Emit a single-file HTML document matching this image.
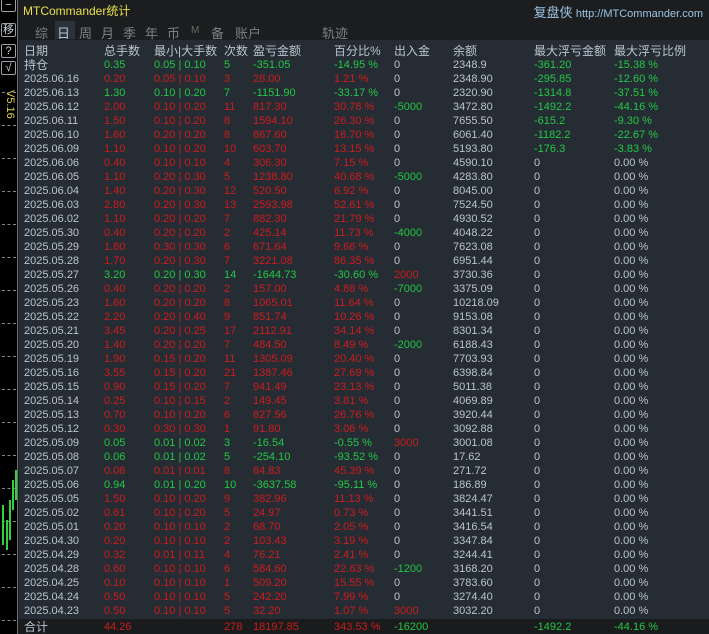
<!DOCTYPE html>
<html><head><meta charset="utf-8">
<style>
*{margin:0;padding:0;box-sizing:border-box}
body{width:709px;height:634px;background:#1c1d1f;font-family:"Liberation Sans","Noto Sans CJK SC",sans-serif;overflow:hidden;position:relative;color:#b8c4d0}
#strip{position:absolute;left:0;top:0;width:18px;height:634px;background:#000;border-right:1px solid #6a6e74}
.btn{position:absolute;left:1px;width:15px;height:14px;border:1px solid #9aa0a6;border-radius:2px;color:#d0d4d8;font-size:11px;line-height:12px;text-align:center}
.tick{position:absolute;left:2px;width:14px;border-top:1px dashed #888}
#title{position:absolute;left:19px;top:0;width:690px;height:40px;background:#1c1d1f}
#table{position:absolute;left:19px;top:40px;width:690px;height:594px;background:#262c34}
.row{position:absolute;left:0;height:14px;font-size:11px;line-height:14px;white-space:nowrap}
.row span{position:absolute;top:0}
.c0{left:5px}.c1{left:85px}.c2{left:135px}.c3{left:205px}.c4{left:234px}.c5{left:315px}.c6{left:375px}.c7{left:434px}.c8{left:515px}.c9{left:595px}
.r{color:#cc1c1c}.g{color:#22c744}
.h{font-size:12px;color:#b8c4d0}
</style></head><body>
<div id="strip">
<div class="btn" style="top:-2px">−</div>
<div class="btn" style="top:23px">移</div>
<div class="btn" style="top:44px">?</div>
<div class="btn" style="top:61px">√</div>
<div style="position:absolute;left:2px;top:90px;color:#e6d84a;font-size:11px;transform:rotate(90deg);transform-origin:left top;left:16px;white-space:nowrap">V5.16</div>
<div class="tick" style="top:92px"></div><div class="tick" style="top:125px"></div><div class="tick" style="top:158px"></div><div class="tick" style="top:191px"></div><div class="tick" style="top:224px"></div><div class="tick" style="top:257px"></div><div class="tick" style="top:290px"></div><div class="tick" style="top:323px"></div><div class="tick" style="top:356px"></div><div class="tick" style="top:389px"></div><div class="tick" style="top:422px"></div><div class="tick" style="top:455px"></div><div class="tick" style="top:488px"></div><div class="tick" style="top:521px"></div><div class="tick" style="top:554px"></div><div class="tick" style="top:587px"></div><div class="tick" style="top:620px"></div>
<div style="position:absolute;left:15px;top:470px;width:2px;height:30px;background:#2fd13f"></div>
<div style="position:absolute;left:12px;top:480px;width:2px;height:30px;background:#2fd13f"></div>
<div style="position:absolute;left:9px;top:500px;width:2px;height:40px;background:#2fd13f"></div>
<div style="position:absolute;left:6px;top:520px;width:2px;height:30px;background:#2fd13f"></div>
<div style="position:absolute;left:2px;top:505px;width:2px;height:40px;background:#2fd13f"></div>
</div>
<div id="title">
<div style="position:absolute;left:4px;top:2px;color:#e8e04a;font-size:12px">MTCommander统计</div>
<div style="position:absolute;right:6px;top:2px;font-size:12px;color:#9cc4e4"><span style="font-size:13px">复盘侠</span> <span style="font-size:11px">http://MTCommander.com</span></div>
<div style="position:absolute;left:36px;top:21px;width:20px;height:18px;background:#2a323c"></div>
<div style="position:absolute;top:23px;left:0;font-size:13px;color:#7a8088;white-space:nowrap">
<span style="position:absolute;left:16px">综</span><span style="position:absolute;left:38px;color:#b8c4d0">日</span><span style="position:absolute;left:60px">周</span><span style="position:absolute;left:82px">月</span><span style="position:absolute;left:104px">季</span><span style="position:absolute;left:126px">年</span><span style="position:absolute;left:148px">币</span><span style="position:absolute;left:172px;font-size:10px;top:2px;color:#666">M</span><span style="position:absolute;left:192px">备</span><span style="position:absolute;left:216px">账户</span><span style="position:absolute;left:303px">轨迹</span></div>
</div>
<div id="table">
<div class="row h" style="top:4px;height:16px"><span class="c0">日期</span><span class="c1">总手数</span><span class="c2">最小|大手数</span><span class="c3">次数</span><span class="c4">盈亏金额</span><span class="c5">百分比%</span><span class="c6">出入金</span><span class="c7">余额</span><span class="c8">最大浮亏金额</span><span class="c9">最大浮亏比例</span></div>
<div class="row" style="top:18px"><span class="c0 h">持仓</span><span class="c1 g">0.35</span><span class="c2 g">0.05 | 0.10</span><span class="c3 g">5</span><span class="c4 g">-351.05</span><span class="c5 g">-14.95 %</span><span class="c6">0</span><span class="c7">2348.9</span><span class="c8 g">-361.20</span><span class="c9 g">-15.38 %</span></div>
<div class="row" style="top:32px"><span class="c0">2025.06.16</span><span class="c1 r">0.20</span><span class="c2 r">0.05 | 0.10</span><span class="c3 r">3</span><span class="c4 r">28.00</span><span class="c5 r">1.21 %</span><span class="c6">0</span><span class="c7">2348.90</span><span class="c8 g">-295.85</span><span class="c9 g">-12.60 %</span></div>
<div class="row" style="top:46px"><span class="c0">2025.06.13</span><span class="c1 g">1.30</span><span class="c2 g">0.10 | 0.20</span><span class="c3 g">7</span><span class="c4 g">-1151.90</span><span class="c5 g">-33.17 %</span><span class="c6">0</span><span class="c7">2320.90</span><span class="c8 g">-1314.8</span><span class="c9 g">-37.51 %</span></div>
<div class="row" style="top:60px"><span class="c0">2025.06.12</span><span class="c1 r">2.00</span><span class="c2 r">0.10 | 0.20</span><span class="c3 r">11</span><span class="c4 r">817.30</span><span class="c5 r">30.78 %</span><span class="c6 g">-5000</span><span class="c7">3472.80</span><span class="c8 g">-1492.2</span><span class="c9 g">-44.16 %</span></div>
<div class="row" style="top:74px"><span class="c0">2025.06.11</span><span class="c1 r">1.50</span><span class="c2 r">0.10 | 0.20</span><span class="c3 r">8</span><span class="c4 r">1594.10</span><span class="c5 r">26.30 %</span><span class="c6">0</span><span class="c7">7655.50</span><span class="c8 g">-615.2</span><span class="c9 g">-9.30 %</span></div>
<div class="row" style="top:88px"><span class="c0">2025.06.10</span><span class="c1 r">1.60</span><span class="c2 r">0.20 | 0.20</span><span class="c3 r">8</span><span class="c4 r">867.60</span><span class="c5 r">16.70 %</span><span class="c6">0</span><span class="c7">6061.40</span><span class="c8 g">-1182.2</span><span class="c9 g">-22.67 %</span></div>
<div class="row" style="top:102px"><span class="c0">2025.06.09</span><span class="c1 r">1.10</span><span class="c2 r">0.10 | 0.20</span><span class="c3 r">10</span><span class="c4 r">603.70</span><span class="c5 r">13.15 %</span><span class="c6">0</span><span class="c7">5193.80</span><span class="c8 g">-176.3</span><span class="c9 g">-3.83 %</span></div>
<div class="row" style="top:116px"><span class="c0">2025.06.06</span><span class="c1 r">0.40</span><span class="c2 r">0.10 | 0.10</span><span class="c3 r">4</span><span class="c4 r">306.30</span><span class="c5 r">7.15 %</span><span class="c6">0</span><span class="c7">4590.10</span><span class="c8">0</span><span class="c9">0.00 %</span></div>
<div class="row" style="top:130px"><span class="c0">2025.06.05</span><span class="c1 r">1.10</span><span class="c2 r">0.20 | 0.30</span><span class="c3 r">5</span><span class="c4 r">1238.80</span><span class="c5 r">40.68 %</span><span class="c6 g">-5000</span><span class="c7">4283.80</span><span class="c8">0</span><span class="c9">0.00 %</span></div>
<div class="row" style="top:144px"><span class="c0">2025.06.04</span><span class="c1 r">1.40</span><span class="c2 r">0.20 | 0.30</span><span class="c3 r">12</span><span class="c4 r">520.50</span><span class="c5 r">6.92 %</span><span class="c6">0</span><span class="c7">8045.00</span><span class="c8">0</span><span class="c9">0.00 %</span></div>
<div class="row" style="top:158px"><span class="c0">2025.06.03</span><span class="c1 r">2.80</span><span class="c2 r">0.20 | 0.30</span><span class="c3 r">13</span><span class="c4 r">2593.98</span><span class="c5 r">52.61 %</span><span class="c6">0</span><span class="c7">7524.50</span><span class="c8">0</span><span class="c9">0.00 %</span></div>
<div class="row" style="top:172px"><span class="c0">2025.06.02</span><span class="c1 r">1.10</span><span class="c2 r">0.20 | 0.20</span><span class="c3 r">7</span><span class="c4 r">882.30</span><span class="c5 r">21.79 %</span><span class="c6">0</span><span class="c7">4930.52</span><span class="c8">0</span><span class="c9">0.00 %</span></div>
<div class="row" style="top:186px"><span class="c0">2025.05.30</span><span class="c1 r">0.40</span><span class="c2 r">0.20 | 0.20</span><span class="c3 r">2</span><span class="c4 r">425.14</span><span class="c5 r">11.73 %</span><span class="c6 g">-4000</span><span class="c7">4048.22</span><span class="c8">0</span><span class="c9">0.00 %</span></div>
<div class="row" style="top:200px"><span class="c0">2025.05.29</span><span class="c1 r">1.80</span><span class="c2 r">0.30 | 0.30</span><span class="c3 r">6</span><span class="c4 r">671.64</span><span class="c5 r">9.66 %</span><span class="c6">0</span><span class="c7">7623.08</span><span class="c8">0</span><span class="c9">0.00 %</span></div>
<div class="row" style="top:214px"><span class="c0">2025.05.28</span><span class="c1 r">1.70</span><span class="c2 r">0.20 | 0.30</span><span class="c3 r">7</span><span class="c4 r">3221.08</span><span class="c5 r">86.35 %</span><span class="c6">0</span><span class="c7">6951.44</span><span class="c8">0</span><span class="c9">0.00 %</span></div>
<div class="row" style="top:228px"><span class="c0">2025.05.27</span><span class="c1 g">3.20</span><span class="c2 g">0.20 | 0.30</span><span class="c3 g">14</span><span class="c4 g">-1644.73</span><span class="c5 g">-30.60 %</span><span class="c6 r">2000</span><span class="c7">3730.36</span><span class="c8">0</span><span class="c9">0.00 %</span></div>
<div class="row" style="top:242px"><span class="c0">2025.05.26</span><span class="c1 r">0.40</span><span class="c2 r">0.20 | 0.20</span><span class="c3 r">2</span><span class="c4 r">157.00</span><span class="c5 r">4.88 %</span><span class="c6 g">-7000</span><span class="c7">3375.09</span><span class="c8">0</span><span class="c9">0.00 %</span></div>
<div class="row" style="top:256px"><span class="c0">2025.05.23</span><span class="c1 r">1.60</span><span class="c2 r">0.20 | 0.20</span><span class="c3 r">8</span><span class="c4 r">1065.01</span><span class="c5 r">11.64 %</span><span class="c6">0</span><span class="c7">10218.09</span><span class="c8">0</span><span class="c9">0.00 %</span></div>
<div class="row" style="top:270px"><span class="c0">2025.05.22</span><span class="c1 r">2.20</span><span class="c2 r">0.20 | 0.40</span><span class="c3 r">9</span><span class="c4 r">851.74</span><span class="c5 r">10.26 %</span><span class="c6">0</span><span class="c7">9153.08</span><span class="c8">0</span><span class="c9">0.00 %</span></div>
<div class="row" style="top:284px"><span class="c0">2025.05.21</span><span class="c1 r">3.45</span><span class="c2 r">0.20 | 0.25</span><span class="c3 r">17</span><span class="c4 r">2112.91</span><span class="c5 r">34.14 %</span><span class="c6">0</span><span class="c7">8301.34</span><span class="c8">0</span><span class="c9">0.00 %</span></div>
<div class="row" style="top:298px"><span class="c0">2025.05.20</span><span class="c1 r">1.40</span><span class="c2 r">0.20 | 0.20</span><span class="c3 r">7</span><span class="c4 r">484.50</span><span class="c5 r">8.49 %</span><span class="c6 g">-2000</span><span class="c7">6188.43</span><span class="c8">0</span><span class="c9">0.00 %</span></div>
<div class="row" style="top:312px"><span class="c0">2025.05.19</span><span class="c1 r">1.90</span><span class="c2 r">0.15 | 0.20</span><span class="c3 r">11</span><span class="c4 r">1305.09</span><span class="c5 r">20.40 %</span><span class="c6">0</span><span class="c7">7703.93</span><span class="c8">0</span><span class="c9">0.00 %</span></div>
<div class="row" style="top:326px"><span class="c0">2025.05.16</span><span class="c1 r">3.55</span><span class="c2 r">0.15 | 0.20</span><span class="c3 r">21</span><span class="c4 r">1387.46</span><span class="c5 r">27.69 %</span><span class="c6">0</span><span class="c7">6398.84</span><span class="c8">0</span><span class="c9">0.00 %</span></div>
<div class="row" style="top:340px"><span class="c0">2025.05.15</span><span class="c1 r">0.90</span><span class="c2 r">0.15 | 0.20</span><span class="c3 r">7</span><span class="c4 r">941.49</span><span class="c5 r">23.13 %</span><span class="c6">0</span><span class="c7">5011.38</span><span class="c8">0</span><span class="c9">0.00 %</span></div>
<div class="row" style="top:354px"><span class="c0">2025.05.14</span><span class="c1 r">0.25</span><span class="c2 r">0.10 | 0.15</span><span class="c3 r">2</span><span class="c4 r">149.45</span><span class="c5 r">3.81 %</span><span class="c6">0</span><span class="c7">4069.89</span><span class="c8">0</span><span class="c9">0.00 %</span></div>
<div class="row" style="top:368px"><span class="c0">2025.05.13</span><span class="c1 r">0.70</span><span class="c2 r">0.10 | 0.20</span><span class="c3 r">6</span><span class="c4 r">827.56</span><span class="c5 r">26.76 %</span><span class="c6">0</span><span class="c7">3920.44</span><span class="c8">0</span><span class="c9">0.00 %</span></div>
<div class="row" style="top:382px"><span class="c0">2025.05.12</span><span class="c1 r">0.30</span><span class="c2 r">0.30 | 0.30</span><span class="c3 r">1</span><span class="c4 r">91.80</span><span class="c5 r">3.06 %</span><span class="c6">0</span><span class="c7">3092.88</span><span class="c8">0</span><span class="c9">0.00 %</span></div>
<div class="row" style="top:396px"><span class="c0">2025.05.09</span><span class="c1 g">0.05</span><span class="c2 g">0.01 | 0.02</span><span class="c3 g">3</span><span class="c4 g">-16.54</span><span class="c5 g">-0.55 %</span><span class="c6 r">3000</span><span class="c7">3001.08</span><span class="c8">0</span><span class="c9">0.00 %</span></div>
<div class="row" style="top:410px"><span class="c0">2025.05.08</span><span class="c1 g">0.06</span><span class="c2 g">0.01 | 0.02</span><span class="c3 g">5</span><span class="c4 g">-254.10</span><span class="c5 g">-93.52 %</span><span class="c6">0</span><span class="c7">17.62</span><span class="c8">0</span><span class="c9">0.00 %</span></div>
<div class="row" style="top:424px"><span class="c0">2025.05.07</span><span class="c1 r">0.08</span><span class="c2 r">0.01 | 0.01</span><span class="c3 r">8</span><span class="c4 r">84.83</span><span class="c5 r">45.39 %</span><span class="c6">0</span><span class="c7">271.72</span><span class="c8">0</span><span class="c9">0.00 %</span></div>
<div class="row" style="top:438px"><span class="c0">2025.05.06</span><span class="c1 g">0.94</span><span class="c2 g">0.01 | 0.20</span><span class="c3 g">10</span><span class="c4 g">-3637.58</span><span class="c5 g">-95.11 %</span><span class="c6">0</span><span class="c7">186.89</span><span class="c8">0</span><span class="c9">0.00 %</span></div>
<div class="row" style="top:452px"><span class="c0">2025.05.05</span><span class="c1 r">1.50</span><span class="c2 r">0.10 | 0.20</span><span class="c3 r">9</span><span class="c4 r">382.96</span><span class="c5 r">11.13 %</span><span class="c6">0</span><span class="c7">3824.47</span><span class="c8">0</span><span class="c9">0.00 %</span></div>
<div class="row" style="top:466px"><span class="c0">2025.05.02</span><span class="c1 r">0.61</span><span class="c2 r">0.10 | 0.20</span><span class="c3 r">5</span><span class="c4 r">24.97</span><span class="c5 r">0.73 %</span><span class="c6">0</span><span class="c7">3441.51</span><span class="c8">0</span><span class="c9">0.00 %</span></div>
<div class="row" style="top:480px"><span class="c0">2025.05.01</span><span class="c1 r">0.20</span><span class="c2 r">0.10 | 0.10</span><span class="c3 r">2</span><span class="c4 r">68.70</span><span class="c5 r">2.05 %</span><span class="c6">0</span><span class="c7">3416.54</span><span class="c8">0</span><span class="c9">0.00 %</span></div>
<div class="row" style="top:494px"><span class="c0">2025.04.30</span><span class="c1 r">0.20</span><span class="c2 r">0.10 | 0.10</span><span class="c3 r">2</span><span class="c4 r">103.43</span><span class="c5 r">3.19 %</span><span class="c6">0</span><span class="c7">3347.84</span><span class="c8">0</span><span class="c9">0.00 %</span></div>
<div class="row" style="top:508px"><span class="c0">2025.04.29</span><span class="c1 r">0.32</span><span class="c2 r">0.01 | 0.11</span><span class="c3 r">4</span><span class="c4 r">76.21</span><span class="c5 r">2.41 %</span><span class="c6">0</span><span class="c7">3244.41</span><span class="c8">0</span><span class="c9">0.00 %</span></div>
<div class="row" style="top:522px"><span class="c0">2025.04.28</span><span class="c1 r">0.60</span><span class="c2 r">0.10 | 0.10</span><span class="c3 r">6</span><span class="c4 r">584.60</span><span class="c5 r">22.63 %</span><span class="c6 g">-1200</span><span class="c7">3168.20</span><span class="c8">0</span><span class="c9">0.00 %</span></div>
<div class="row" style="top:536px"><span class="c0">2025.04.25</span><span class="c1 r">0.10</span><span class="c2 r">0.10 | 0.10</span><span class="c3 r">1</span><span class="c4 r">509.20</span><span class="c5 r">15.55 %</span><span class="c6">0</span><span class="c7">3783.60</span><span class="c8">0</span><span class="c9">0.00 %</span></div>
<div class="row" style="top:550px"><span class="c0">2025.04.24</span><span class="c1 r">0.50</span><span class="c2 r">0.10 | 0.10</span><span class="c3 r">5</span><span class="c4 r">242.20</span><span class="c5 r">7.99 %</span><span class="c6">0</span><span class="c7">3274.40</span><span class="c8">0</span><span class="c9">0.00 %</span></div>
<div class="row" style="top:564px"><span class="c0">2025.04.23</span><span class="c1 r">0.50</span><span class="c2 r">0.10 | 0.10</span><span class="c3 r">5</span><span class="c4 r">32.20</span><span class="c5 r">1.07 %</span><span class="c6 r">3000</span><span class="c7">3032.20</span><span class="c8">0</span><span class="c9">0.00 %</span></div>
<div style="position:absolute;left:0;top:579px;width:690px;height:15px;background:#1a1b1d"></div>
<div class="row" style="top:580px"><span class="c0 h">合计</span><span class="c1 r">44.26</span><span class="c3 r">278</span><span class="c4 r">18197.85</span><span class="c5 r">343.53 %</span><span class="c6 g">-16200</span><span class="c8 g">-1492.2</span><span class="c9 g">-44.16 %</span></div>
</div>
</body></html>
